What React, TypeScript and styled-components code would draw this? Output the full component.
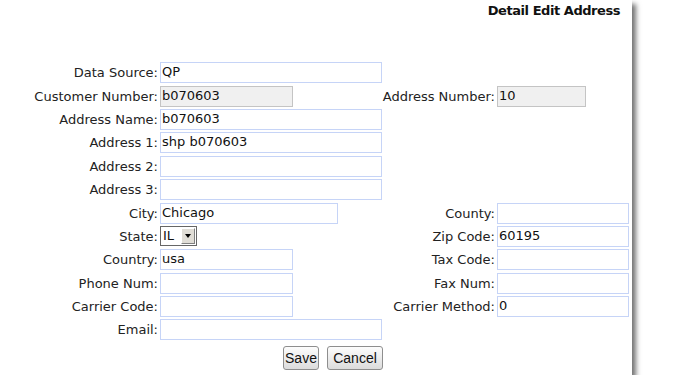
import React from 'react'
import styled, { createGlobalStyle } from 'styled-components'

const GlobalStyle = createGlobalStyle`
  html, body {
    margin: 0;
    padding: 0;
    background: #fff;
  }
  body {
    font-family: "DejaVu Sans", Verdana, sans-serif;
    font-size: 13px;
    color: #222;
  }
`

const Panel = styled.div`
  width: 632px;
  height: 375px;
  background: #fff;
  box-shadow: 4px 4px 5px rgba(0, 0, 0, 0.55);
  box-sizing: border-box;
  display: flex;
  flex-direction: column;
`

const Title = styled.div`
  font-weight: bold;
  font-size: 13px;
  letter-spacing: -0.45px;
  color: #111;
  text-align: right;
  padding: 3px 12px 0 0;
  height: 61px;
  box-sizing: border-box;
`

const Form = styled.div`
  display: grid;
  grid-template-columns: 160px 222px 115px 135px;
  grid-auto-rows: 23.4px;
  align-items: center;
`

const Label = styled.label`
  text-align: right;
  padding-right: 2px;
  white-space: nowrap;
  color: #222;
`

const Field = styled.div<{ $w: number; $readOnly?: boolean }>`
  width: ${(p) => p.$w}px;
  height: 21px;
  box-sizing: border-box;
  border: 1px solid ${(p) => (p.$readOnly ? '#c4c4c4' : '#c6d4f7')};
  background: ${(p) => (p.$readOnly ? '#f0f0f0' : '#fff')};
  padding: 0 1px;
  line-height: 17px;
  color: #111;
  white-space: nowrap;
  overflow: hidden;
`

const Spacer = styled.div``

const Select = styled.div`
  width: 37px;
  height: 20px;
  box-sizing: border-box;
  border: 1px solid #666;
  display: flex;
  align-items: stretch;
  background: #fff;
`

const SelectText = styled.span`
  flex: 1;
  font-size: 13px;
  line-height: 18px;
  padding-left: 2px;
  color: #111;
`

const SelectButton = styled.span`
  width: 14px;
  margin: 1px;
  box-sizing: border-box;
  background: #e0ddd6;
  border: 1px solid;
  border-color: #fff #808080 #808080 #fff;
  display: flex;
  align-items: center;
  justify-content: center;

  &::after {
    content: '';
    border-left: 3.5px solid transparent;
    border-right: 3.5px solid transparent;
    border-top: 4px solid #000;
  }
`

const Actions = styled.div`
  display: flex;
  gap: 8px;
  padding-left: 283px;
  margin-top: 4px;
`

const Button = styled.button<{ $w: number }>`
  width: ${(p) => p.$w}px;
  height: 24px;
  padding: 0;
  font-family: "Liberation Sans", Arial, sans-serif;
  font-size: 14px;
  color: #111;
  border: 1px solid #8e8e8e;
  border-radius: 3px;
  background: linear-gradient(#fdfdfd, #dcdcdc);
  cursor: pointer;
`

type Row = {
  label: string
  value?: string
  w: number
  readOnly?: boolean
  select?: boolean
  right?: { label: string; value?: string; w: number; readOnly?: boolean }
}

const rows: Row[] = [
  { label: 'Data Source:', value: 'QP', w: 222 },
  {
    label: 'Customer Number:',
    value: 'b070603',
    w: 133,
    readOnly: true,
    right: { label: 'Address Number:', value: '10', w: 89, readOnly: true },
  },
  { label: 'Address Name:', value: 'b070603', w: 222 },
  { label: 'Address 1:', value: 'shp b070603', w: 222 },
  { label: 'Address 2:', w: 222 },
  { label: 'Address 3:', w: 222 },
  { label: 'City:', value: 'Chicago', w: 178, right: { label: 'County:', w: 132 } },
  { label: 'State:', value: 'IL', w: 37, select: true, right: { label: 'Zip Code:', value: '60195', w: 132 } },
  { label: 'Country:', value: 'usa', w: 133, right: { label: 'Tax Code:', w: 132 } },
  { label: 'Phone Num:', w: 133, right: { label: 'Fax Num:', w: 132 } },
  { label: 'Carrier Code:', w: 133, right: { label: 'Carrier Method:', value: '0', w: 132 } },
  { label: 'Email:', w: 222 },
]

const App = () => (
  <>
    <GlobalStyle />
    <Panel>
      <Title>Detail Edit Address</Title>
      <Form>
        {rows.map((r) => (
          <React.Fragment key={r.label}>
            <Label>{r.label}</Label>
            {r.select ? (
              <Select>
                <SelectText>{r.value}</SelectText>
                <SelectButton />
              </Select>
            ) : (
              <Field $w={r.w} $readOnly={r.readOnly}>
                {r.value}
              </Field>
            )}
            {r.right ? (
              <>
                <Label>{r.right.label}</Label>
                <Field $w={r.right.w} $readOnly={r.right.readOnly}>
                  {r.right.value}
                </Field>
              </>
            ) : (
              <>
                <Spacer />
                <Spacer />
              </>
            )}
          </React.Fragment>
        ))}
      </Form>
      <Actions>
        <Button $w={36}>Save</Button>
        <Button $w={56}>Cancel</Button>
      </Actions>
    </Panel>
  </>
)

export default App
